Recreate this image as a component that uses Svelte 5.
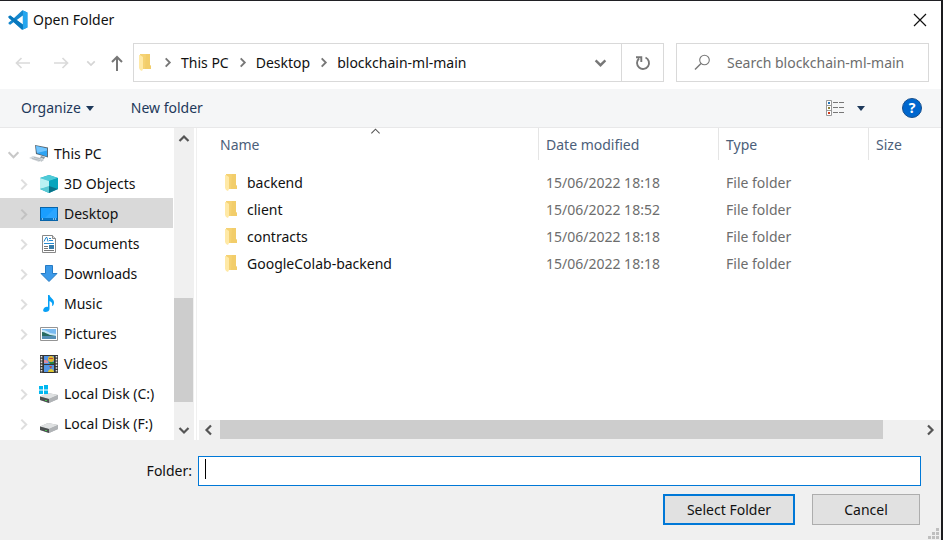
<script>
  const crumbs = ['This PC', 'Desktop', 'blockchain-ml-main'];
  const places = [
    { name: '3D Objects', icon: 'cube' },
    { name: 'Desktop', icon: 'desktop' },
    { name: 'Documents', icon: 'document' },
    { name: 'Downloads', icon: 'download' },
    { name: 'Music', icon: 'music' },
    { name: 'Pictures', icon: 'picture' },
    { name: 'Videos', icon: 'video' },
    { name: 'Local Disk (C:)', icon: 'system' },
    { name: 'Local Disk (F:)', icon: 'disk' }
  ];
  const files = [
    { name: 'backend', date: '15/06/2022 18:18', type: 'File folder' },
    { name: 'client', date: '15/06/2022 18:52', type: 'File folder' },
    { name: 'contracts', date: '15/06/2022 18:18', type: 'File folder' },
    { name: 'GoogleColab-backend', date: '15/06/2022 18:18', type: 'File folder' }
  ];
  let selected = $state('Desktop');
  let search = $state('');
  let folder = $state('');
</script>

{#snippet chevron(dir, size, width)}
  <svg class="chev {dir}" width={size} height={size} viewBox="0 0 12 12" aria-hidden="true">
    <path d="M4 1.5 8.5 6 4 10.5" fill="none" stroke="currentColor" stroke-width={width} />
  </svg>
{/snippet}

{#snippet folderIcon()}
  <svg class="folder" width="13" height="18" viewBox="0 0 13 18" aria-hidden="true">
    <path d="M1 0h10v11l1 1v3H3L1 14z" fill="#f5d273" />
    <path d="M7 0h4v11l1 1v3H6z" fill="#f0c964" opacity=".6" />
    <path d="M0 1h1l3 2v12l-1 2-2-1-1-2z" fill="#ffe9a6" />
  </svg>
{/snippet}

{#snippet drive()}
  <path d="M1 12.500 9 9l10 2v4l-9 4-9-3z" fill="#a7abae" />
  <path d="M1 12.500 9 9l10 2-9 4z" fill="#dfe1e2" />
  <path d="M1 12.500v3.500l9 3v-4z" fill="#4b4f50" />
  <path d="M10 15v4l9-4v-4z" fill="#b0b3b6" />
  <path d="M6 16h2v1H6z" fill="#49c04e" />
{/snippet}

{#snippet placeIcon(name)}
  <svg width="20" height="20" viewBox="0 0 20 20" aria-hidden="true">
    {#if name === 'pc'}
      <path d="M6 1 19 3.500v10L7 10z" fill="#5c6a75" />
      <path d="M7 2 18 4.400v8L8 9.300z" fill="#2ea3f2" />
      <path d="m7 2 11 2.400v2L8 9z" fill="#71c5ff" />
      <path d="m12 12 4 1-1 2-4-1z" fill="#8d989f" />
      <path d="m0 14 4-2 10 2.500-4 3.500z" fill="#d5d9dc" />
      <path d="m3 14.500 8 2M5 13.300l7 1.700" stroke="#a4acb2" stroke-width=".7" />
      <path d="m11 16 3-1 1 1-3 2z" fill="#c0c6ca" />
    {:else if name === 'cube'}
      <path d="m1 4 9-3 9 3v11l-9 4-9-4z" fill="#13a7bd" />
      <path d="m1 4 9-3 9 3-9 3z" fill="#4ecad7" />
      <path d="m1 4 9 3v6L1 15z" fill="#baf2f3" />
      <path d="m1 15 9-3v7z" fill="#5bcad4" />
      <path d="m10 7 9-3v11l-9-3z" fill="#07a5bd" />
      <path d="m10 12 9 3-9 4z" fill="#087389" />
    {:else if name === 'desktop'}
      <path d="M1 3h18v14H1z" fill="#0764aa" />
      <path d="M2 4h16v10H2z" fill="#1a9eff" />
      <path d="M6 14 16 4h2v10z" fill="#2ba5ff" />
      <path d="M2 14h16v2H2z" fill="#0b78c9" />
      <path d="M3 15h1M14 15h1M16 15h1" stroke="#fff" stroke-width="1" />
    {:else if name === 'document'}
      <path d="M3.500 1.500h10l3 3v14h-13z" fill="#fff" stroke="#888" />
      <path d="M13.500 1.500v3h3" fill="#ddd" stroke="#888" />
      <path d="m5 7.500 2-4h1l1 4M10 4.500h2M10 6.500h4M5 9.500h10" fill="none" stroke="#278bd0" />
      <path d="M5 12.500h4M5 14.500h4M5 16.500h10" stroke="#777" />
      <path d="M10 11h5v4h-5z" fill="#367daa" />
    {:else if name === 'download'}
      <path d="M6.500 1.500h7v8h4.500l-8 8-8-8h4.500z" fill="#3c9ae9" stroke="#267bc4" />
    {:else if name === 'music'}
      <path d="M9 1h1.500c.5 3 5 4 4.500 8-.2 2-1 3-2 3 .8-3-.5-4-2.500-5v8c0 2-2 3-4 3s-3-1-2-3 3-2.500 4.500-2z" fill="#08a0f5" />
    {:else if name === 'picture'}
      <path d="M1.500 3.500h17v13h-17z" fill="#fff" stroke="#949494" />
      <path d="M3 5h14v10H3z" fill="#79baf0" />
      <path d="M3 6c4 0 6 2 8 3l6 1v2H3z" fill="#c9e7f7" />
      <path d="M3 8c3 0 5 2 8 3l6 1v1H3z" fill="#286a60" />
      <path d="M3 12h14v3H3z" fill="#548eb4" />
    {:else if name === 'video'}
      <path d="M1 1h18v18H1z" fill="#343434" />
      <path d="M5 2h10v8H5zM5 11h10v7H5z" fill="#5395e6" />
      <path d="M2.500 2v17M17.500 2v17" stroke="#e4e4e4" stroke-width="1.600" stroke-dasharray="1.600 1.200" />
      <circle cx="12" cy="5" r="3" fill="#e1b92a" />
      <path d="M10 4h4v1h-4z" fill="#bd4b37" />
      <path d="M5 6c2-1 3 1 4 1v2H5z" fill="#d98aa0" />
      <path d="M10 12h3l-1 3z" fill="#bd4b37" />
      <path d="M9 18c0-2 2-3 3-3s3 1 3 3z" fill="#e1c82c" />
      <path d="M10 8h5v2h-4z" fill="#258241" />
    {:else if name === 'system'}
      {@render drive()}
      <path d="M0 2h4v3.500H0zM5 1h4v4.500H5zM0 6.500h4V10H0zM5 6.500h4V10H5z" fill="#00b7f0" />
    {:else}
      {@render drive()}
    {/if}
  </svg>
{/snippet}

<div class="window">
  <header class="title">
    <svg width="20" height="20" viewBox="0 0 100 100" aria-hidden="true">
      <path d="M72 1 29 41 11 27 3 31v8l15 12L3 62v8l8 4 18-14 43 39 25-12V13zM74 28v45L44 50z" fill="#1687cd" fill-rule="evenodd" />
      <path d="m72 1 25 12v74L72 99c3-2 3-5 3-8V8c0-3-1-6-3-7z" fill="#25a6ef" />
      <path d="m11 27-8 4v8l67 60c3-2 4-4 4-8V73z" fill="#0878bd" />
    </svg>
    <h1>Open Folder</h1>
    <button class="close" aria-label="Close">
      <svg width="14" height="14" viewBox="0 0 14 14"><path d="m1 1 12 12M13 1 1 13" stroke="#111" stroke-width="1.200" /></svg>
    </button>
  </header>

  <div class="nav">
    <div class="history">
      <button aria-label="Back" disabled>
        <svg width="16" height="12" viewBox="0 0 16 12"><path d="M15 6H1.500M6.500 1l-5 5 5 5" fill="none" stroke="#dadada" stroke-width="1.700" /></svg>
      </button>
      <button aria-label="Forward" disabled>
        <svg width="16" height="12" viewBox="0 0 16 12"><path d="M1 6h13.500M9.500 1l5 5-5 5" fill="none" stroke="#dadada" stroke-width="1.700" /></svg>
      </button>
      <button class="recent" aria-label="Recent locations" disabled>{@render chevron('down', 10, 2)}</button>
      <button class="up" aria-label="Up">
        <svg width="14" height="16" viewBox="0 0 14 16"><path d="M7 16V2M2 7l5-5 5 5" fill="none" stroke="#777" stroke-width="2" /></svg>
      </button>
    </div>
    <div class="address">
      {@render folderIcon()}
      <ol>
        {#each crumbs as crumb}
          <li>{@render chevron('right', 11, 2)}<a href="#top">{crumb}</a></li>
        {/each}
      </ol>
      <button class="drop" aria-label="Previous locations">{@render chevron('down', 13, 2.2)}</button>
      <button class="refresh" aria-label="Refresh">
        <svg width="16" height="16" viewBox="0 0 16 16"><path d="M10.500 2.500A6 6 0 1 1 4 3.500M1 2.200h5.300V7" fill="none" stroke="#777" stroke-width="1.900" /></svg>
      </button>
    </div>
    <label class="search">
      <svg width="17" height="17" viewBox="0 0 17 17" aria-hidden="true"><circle cx="10.500" cy="6" r="4.800" fill="none" stroke="#777" stroke-width="1.100" /><path d="M7 9.500 1 15.500" stroke="#777" stroke-width="1.400" /></svg>
      <input type="search" aria-label="Search" placeholder="Search blockchain-ml-main" bind:value={search} />
    </label>
  </div>

  <div class="toolbar">
    <button>Organize <span class="tri"></span></button>
    <button>New folder</button>
    <button class="views" aria-label="Change your view">
      <svg width="19" height="16" viewBox="0 0 19 16">
        <path d="M.5.500h5v15h-5zM.5 5.500h5M.5 10.500h5" fill="#fff" stroke="#999" />
        <path d="M7 2.500h5M13 2.500h5M7 7.500h5M13 7.500h5M7 12.500h5M13 12.500h5" stroke="#777" />
        <path d="M2 2h2v2H2z" fill="#2375b8" /><path d="M2 7h2v2H2z" fill="#8a8237" /><path d="M2 12h2v2H2z" fill="#d03a1c" />
      </svg>
    </button>
    <button class="more" aria-label="More options"><span class="tri"></span></button>
    <button class="help" aria-label="Get help"><span>?</span></button>
  </div>

  <main>
    <nav aria-label="Folders">
      <ul>
        <li class="root">
          <button class="expand" aria-label="Collapse This PC">{@render chevron('down', 13, 1.900)}</button>
          <button class="place">{@render placeIcon('pc')}This PC</button>
        </li>
        {#each places as place}
          <li class:selected={selected === place.name}>
            <button class="expand" aria-label="Expand {place.name}">{@render chevron('right', 13, 1.900)}</button>
            <button class="place" onclick={() => (selected = place.name)}>{@render placeIcon(place.icon)}{place.name}</button>
          </li>
        {/each}
      </ul>
      <div class="vbar">
        <button aria-label="Scroll up">{@render chevron('top', 12, 2.200)}</button>
        <div class="track"><div class="thumb"></div></div>
        <button aria-label="Scroll down">{@render chevron('down', 12, 2.200)}</button>
      </div>
    </nav>
    <section>
      <table>
        <colgroup><col class="c-name" /><col class="c-date" /><col class="c-type" /><col /></colgroup>
        <thead>
          <tr>
            <th class="name" aria-sort="ascending"><button>Name<span class="sort">{@render chevron('top', 11, 1.200)}</span></button></th>
            <th><button>Date modified</button></th>
            <th><button>Type</button></th>
            <th><button>Size</button></th>
          </tr>
        </thead>
        <tbody>
          {#each files as file}
            <tr>
              <td class="name"><div>{@render folderIcon()}{file.name}</div></td>
              <td>{file.date}</td>
              <td>{file.type}</td>
              <td></td>
            </tr>
          {/each}
        </tbody>
      </table>
      <div class="hbar">
        <button aria-label="Scroll left">{@render chevron('left', 12, 2.200)}</button>
        <div class="track"><div class="thumb"></div></div>
        <button aria-label="Scroll right">{@render chevron('right', 12, 2.200)}</button>
      </div>
    </section>
  </main>

  <footer>
    <div class="field">
      <label for="folder">Folder:</label>
      <div class="entry">
        <input id="folder" type="text" bind:value={folder} />
        <span class="caret"></span>
      </div>
    </div>
    <div class="actions">
      <button class="primary">Select Folder</button>
      <button class="cancel">Cancel</button>
    </div>
    <svg class="grip" width="12" height="12" viewBox="0 0 12 12" aria-hidden="true"><path d="M9 0h3v3H9zM9 4h3v3H9zM9 8h3v3H9zM5 4h3v3H5zM5 8h3v3H5zM1 8h3v3H1z" fill="#bfbfbf" /></svg>
  </footer>
</div>

<style>
  :global(body) { margin: 0; }
  .window {
    box-sizing: border-box;
    min-height: 100vh;
    display: flex;
    flex-direction: column;
    border-top: 1px solid #202024;
    border-right: 2px solid #1b1b1e;
    background: #fff;
    color: #111;
    font: 14px/20px "Noto Sans", "Open Sans", sans-serif;
  }
  .window * { box-sizing: border-box; }
  button, input { font: inherit; color: inherit; }
  button {
    display: flex;
    align-items: center;
    justify-content: center;
    padding: 0;
    border: 0;
    background: none;
    white-space: nowrap;
  }
  svg { display: block; flex: none; }
  .down { transform: rotate(90deg); }
  .left { transform: rotate(180deg); }
  .top { transform: rotate(-90deg); }
  ul, ol { list-style: none; margin: 0; padding: 0; }

  .title { display: flex; align-items: center; height: 37px; padding-left: 8px; gap: 5px; }
  h1 { margin: 0; font: inherit; }
  .close { margin-left: auto; width: 42px; height: 36px; }

  .nav { display: flex; padding: 5px 12px 7px 8px; }
  .history { display: flex; gap: 8px; margin-right: 2px; }
  .history button { width: 30px; height: 39px; }
  .history .recent { width: 14px; color: #d5d5d5; }
  .history .up { width: 29px; margin-left: -4px; }
  .address { flex: 1; display: flex; align-items: center; height: 39px; border: 1px solid #d9d9d9; padding-left: 5px; }
  .address ol { display: flex; flex: 1; margin-left: 10px; }
  .address li { display: flex; align-items: center; gap: 8px; margin-right: 8px; color: #777; }
  .address a { color: #111; text-decoration: none; }
  .drop { width: 42px; height: 37px; color: #777; }
  .refresh { width: 42px; height: 37px; border-left: 1px solid #d9d9d9; }
  .search { display: flex; align-items: center; gap: 16px; width: 253px; height: 39px; margin-left: 12px; padding-left: 17px; border: 1px solid #d9d9d9; }
  .search input { flex: 1; min-width: 0; padding: 0; border: 0; outline: 0; background: none; }
  .search input::placeholder { color: #6d6d6d; opacity: 1; }

  .toolbar { display: flex; align-items: center; height: 39px; padding: 0 19px 0 21px; background: #f5f6f7; border-bottom: 1px solid #e8e8e9; color: #1e395b; }
  .toolbar button + button { margin-left: 37px; }
  .tri { border: 4px solid transparent; border-top: 5px solid #1e395b; border-bottom: 0; margin-left: 5px; }
  .toolbar .views { margin-left: auto; }
  .toolbar .more { margin-left: 7px; }
  .toolbar .help { width: 20px; height: 20px; border: 1px solid #174f8c; border-radius: 50%; background: #0067ce; color: #fff; font-weight: 700; }

  main { flex: 1; display: flex; }
  nav { display: flex; width: 197px; padding-right: 2px; border-right: 1px solid #f0f0f0; }
  nav ul { flex: 1; padding: 10px 1px 2px 0; }
  nav li { display: flex; height: 30px; padding-left: 16px; }
  nav li.root { padding-left: 6px; }
  .expand { width: 14px; padding-top: 2px; color: #dedede; }
  .root .expand { color: #c8c8c8; }
  .selected { background: #d9d9d9; }
  .selected .expand { color: #c2c2c2; }
  .place { flex: 1; justify-content: flex-start; gap: 5px; padding: 2px 0 0 9px; }
  .vbar { display: flex; flex-direction: column; width: 20px; background: #f0f0f0; color: #555; }
  .vbar button { height: 21px; }
  .vbar .track { flex: 1; display: flex; flex-direction: column; justify-content: flex-end; padding-bottom: 17px; }
  .vbar .thumb { height: 41%; background: #cdcdcd; margin-right: 1px; }

  section { flex: 1; min-width: 0; display: flex; flex-direction: column; justify-content: space-between; }
  table { width: 100%; table-layout: fixed; border-collapse: separate; border-spacing: 0; }
  .c-name { width: 341px; }
  .c-date { width: 180px; }
  .c-type { width: 150px; }
  th { height: 32px; padding: 0; border-left: 1px solid #e5e5e5; font-weight: 400; color: #4c607a; }
  th.name { border: 0; padding-left: 15px; }
  th button { position: relative; width: 100%; height: 32px; padding: 2px 7px 0; justify-content: flex-start; }
  th.name button { padding-left: 8px; }
  .sort { position: absolute; top: -2px; left: 50%; margin-left: -5px; color: #555; }
  tbody::before { content: ""; display: block; height: 9px; }
  td { height: 27px; padding: 0 0 0 8px; color: #6d6d6d; white-space: nowrap; }
  td.name { padding-left: 28px; color: #111; }
  td.name div { display: flex; align-items: center; gap: 9px; }
  .hbar { display: flex; height: 20px; margin-left: 2px; background: #f0f0f0; color: #555; }
  .hbar button { width: 21px; padding-right: 2px; }
  .hbar .track { flex: 1; padding-bottom: 1px; }
  .hbar .thumb { width: 94.7%; height: 100%; background: #cdcdcd; }

  footer { position: relative; padding: 16px 20px 15px 0; background: #f0f0f0; }
  .field { display: flex; align-items: center; gap: 6px; }
  .field label { width: 192px; text-align: right; }
  .entry { position: relative; flex: 1; }
  .entry input { display: block; width: 100%; height: 30px; padding: 0 7px; border: 1px solid #0078d7; outline: 0; background: #fff; }
  .caret { position: absolute; left: 7px; top: 3px; width: 1px; height: 20px; background: #000; }
  .actions { display: flex; justify-content: flex-end; gap: 17px; margin-top: 8px; padding-right: 1px; }
  .actions button { height: 31px; background: #e1e1e1; }
  .actions .primary { width: 132px; border: 2px solid #0078d7; }
  .actions .cancel { width: 108px; border: 1px solid #adadad; }
  .grip { position: absolute; right: 2px; bottom: 0; }
</style>
